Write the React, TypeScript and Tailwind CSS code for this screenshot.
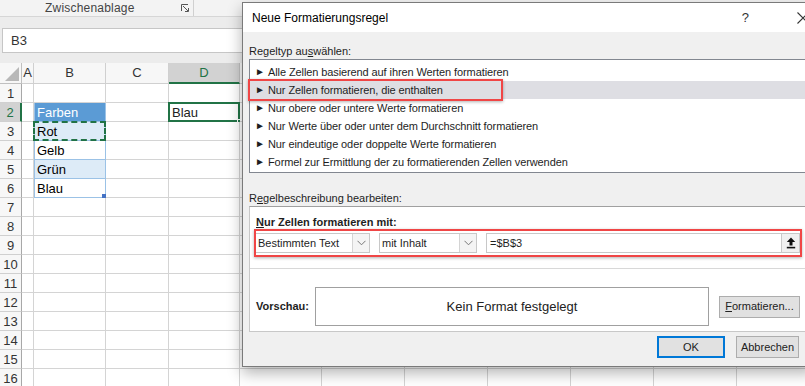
import React from "react";

const cols = [
  { label: "A", w: 12 },
  { label: "B", w: 72 },
  { label: "C", w: 63 },
  { label: "D", w: 71 },
  { label: "E", w: 82 },
  { label: "F", w: 83 },
  { label: "G", w: 83 },
  { label: "H", w: 83 },
  { label: "I", w: 83 },
  { label: "J", w: 83 },
  { label: "K", w: 83 },
];

// headers from E on sit under the dialog
const visibleHeaders = ["A", "B", "C", "D"];

const rows = Array.from({ length: 16 }, (_, i) => i + 1);

const ruleTypes = [
  "Alle Zellen basierend auf ihren Werten formatieren",
  "Nur Zellen formatieren, die enthalten",
  "Nur obere oder untere Werte formatieren",
  "Nur Werte über oder unter dem Durchschnitt formatieren",
  "Nur eindeutige oder doppelte Werte formatieren",
  "Formel zur Ermittlung der zu formatierenden Zellen verwenden",
];

function Cell({ row, col }: { row: number; col: string }) {
  const w = cols.find((c) => c.label === col)!.w;
  let cls = "border-r border-b border-[#d4d4d4] bg-white";
  let text = "";
  let extra: React.ReactNode = null;

  if (col === "B" && row >= 2 && row <= 6) {
    cls = "border-r border-b border-[#9bc2e6] shadow-[inset_1px_0_0_#9bc2e6]";
    if (row === 2) cls += " bg-[#5b9bd5] text-white";
    else if (row === 3 || row === 5) cls += " bg-[#ddebf7] text-black";
    else cls += " bg-white text-black";
    text = ["", "", "Farben", "Rot", "Gelb", "Grün", "Blau"][row];
    if (row === 3) {
      extra = <span className="pointer-events-none absolute -left-px -top-px -right-px -bottom-px border-2 border-dashed border-[#217346]" />;
    }
    if (row === 6) {
      extra = <span className="absolute -bottom-px -right-px h-[4px] w-[4px] bg-[#4472c4]" />;
    }
  }
  if (col === "D" && row === 2) {
    text = "Blau";
    extra = (
      <>
        <span className="pointer-events-none absolute -left-px -top-px -right-px -bottom-px border-2 border-[#217346]" />
        <span className="absolute -bottom-[3px] -right-[3px] h-[5px] w-[5px] border border-white bg-[#217346]" />
      </>
    );
  }

  return (
    <div
      className={`relative flex h-[19px] shrink-0 items-center pl-[3px] text-[13px] leading-[17px] ${cls}`}
      style={{ width: w }}
    >
      {text}
      {extra}
    </div>
  );
}

function Sheet() {
  return (
    <div className="flex flex-col font-['Liberation_Sans',sans-serif] text-[#222]">
      <div className="flex h-[17px] items-center border-b border-[#d6d6d6] bg-[#f3f3f3]">
        <span className="ml-[45px] w-[126px] text-[12px] leading-[16px] tracking-[0.2px] text-[#444]">Zwischenablage</span>
        <svg className="ml-[10px]" width="8" height="8" viewBox="0 0 8 8" fill="none" stroke="#555" strokeWidth="1">
          <path d="M0.5 7 V0.5 H7" />
          <path d="M2 2 L7 7 M7.5 4 V7.5 H4" />
        </svg>
        <span className="ml-[4px] h-full w-px bg-[#d0d0d0]" />
      </div>
      <div className="h-[46px] bg-[#ececec] pt-[11px]">
        <div className="ml-[2px] flex h-[25px] w-[260px] items-center border border-[#c6c6c6] bg-white pl-[8px] text-[13px] text-[#333]">
          B3
        </div>
      </div>
      <div className="flex h-[21px] bg-[#f7f7f7]">
        <div className="flex w-[22px] shrink-0 items-end justify-end border-r border-b border-[#c0c0c0] p-[2px]">
          <svg width="14" height="14" viewBox="0 0 14 14">
            <polygon points="14,0 14,14 0,14" fill="#b8b8b8" />
          </svg>
        </div>
        {cols.map((c) =>
          c.label === "D" ? (
            <div
              key={c.label}
              className="flex shrink-0 items-center justify-center border-r border-b-2 border-r-[#c0c0c0] border-b-[#217346] bg-[#d2d2d2] text-[13px] text-[#217346]"
              style={{ width: c.w }}
            >
              {c.label}
            </div>
          ) : (
            <div
              key={c.label}
              className="flex shrink-0 items-center justify-center border-r border-b border-[#d0d0d0] text-[13px] text-[#333]"
              style={{ width: c.w }}
            >
              {visibleHeaders.includes(c.label) ? c.label : null}
            </div>
          ),
        )}
      </div>
      {rows.map((r) => (
        <div key={r} className="flex">
          <div
            className={`flex h-[19px] w-[22px] shrink-0 items-center justify-center border-b border-[#d0d0d0] text-[13px] leading-[17px] ${
              r === 2
                ? "border-r-2 border-r-[#217346] bg-[#d2d2d2] text-[#217346]"
                : "border-r border-r-[#a8a8a8] bg-[#f7f7f7] text-[#333]"
            }`}
          >
            {r}
          </div>
          {cols.map((c) => (
            <Cell key={c.label} row={r} col={c.label} />
          ))}
        </div>
      ))}
    </div>
  );
}

function Chevron() {
  return (
    <svg width="9" height="6" viewBox="0 0 9 6" fill="none" stroke="#777" strokeWidth="1">
      <path d="M0.5 0.8 L4.5 4.8 L8.5 0.8" />
    </svg>
  );
}

function SelectBox({ value, w }: { value: string; w: number }) {
  return (
    <div className="flex h-[20px] shrink-0 items-stretch border border-[#c8c8c8] bg-white" style={{ width: w }}>
      <span className="flex flex-1 items-center pl-[2px]">{value}</span>
      <span className="flex w-[17px] items-center justify-center border-l border-[#d4d4d4] bg-[#f4f4f4]">
        <Chevron />
      </span>
    </div>
  );
}

function Button({ children, primary, w }: { children: React.ReactNode; primary?: boolean; w: number }) {
  return (
    <div
      className={`flex h-[22px] items-center justify-center bg-[#e1e1e1] text-[11px] text-[#222] ${
        primary ? "border-2 border-[#0078d7]" : "border border-[#adadad]"
      }`}
      style={{ width: w }}
    >
      {children}
    </div>
  );
}

function Dialog() {
  return (
    <div className="absolute left-[242px] top-[2px] flex h-[365px] w-[572px] flex-col border border-[#7a7a7a] bg-[#f0f0f0] font-['Liberation_Sans',sans-serif] text-[11px] text-[#1e1e1e] shadow-[0_6px_14px_rgba(0,0,0,0.3)]">
      <div className="flex h-[29px] shrink-0 items-center bg-white pl-[9px]">
        <span className="text-[12px] text-black">Neue Formatierungsregel</span>
        <span className="ml-auto text-[13px] text-[#333]">?</span>
        <svg className="ml-[48px] mr-[4px]" width="12" height="12" viewBox="0 0 12 12" stroke="#333" strokeWidth="1.1">
          <path d="M0.5 0.5 L11.5 11.5 M11.5 0.5 L0.5 11.5" />
        </svg>
      </div>

      <div className="flex flex-1 flex-col px-[6px] pt-[11px]">
        <div className="h-[16px] leading-[16px]">
          Regeltyp au<span className="underline">s</span>wählen:
        </div>
        <div className="h-[114px] border border-[#828790] bg-white pt-[3px]">
          {ruleTypes.map((t, i) => (
            <div
              key={t}
              className={`flex h-[18px] items-center gap-[3px] pl-[5px] leading-[18px] ${i === 1 ? "bg-[#dedee3]" : ""}`}
            >
              <span className="w-[10px] text-[10px] leading-[18px]">►</span>
              <span className="whitespace-nowrap tracking-[-0.1px]">{t}</span>
            </div>
          ))}
        </div>

        <div className="mt-[17px] h-[16px] leading-[16px]">
          R<span className="underline">e</span>gelbeschreibung bearbeiten:
        </div>
        <div className="flex h-[126px] flex-col border border-[#c8c8c8] border-t-[#a0a0a0] bg-white pt-[7px]">
          <div className="h-[16px] pl-[6px] font-bold leading-[16px]">
            <span className="underline">N</span>ur Zellen formatieren mit:
          </div>
          <div className="mt-[3px] flex items-center pl-[5px] pr-[6px]">
            <SelectBox value="Bestimmten Text" w={115} />
            <span className="w-[9px]" />
            <SelectBox value="mit Inhalt" w={98} />
            <span className="w-[9px]" />
            <div className="flex h-[20px] flex-1 items-stretch border border-[#c8c8c8] bg-white">
              <span className="flex flex-1 items-center pl-[3px]">=$B$3</span>
              <span className="flex w-[18px] items-center justify-center border-l border-[#c8c8c8] bg-[#f0f0f0]">
                <svg width="10" height="12" viewBox="0 0 10 12" fill="#111">
                  <polygon points="5,0.5 0.8,5 3.5,5 3.5,8.6 6.5,8.6 6.5,5 9.2,5" />
                  <rect x="0.8" y="9.8" width="8.4" height="1.6" />
                </svg>
              </span>
            </div>
          </div>
          <div className="mt-[15px] h-px bg-[#d8d8d8]" />
          <div className="mt-[18px] flex items-center pl-[6px] pr-[6px]">
            <span className="w-[59px] font-bold">Vorschau:</span>
            <div className="flex h-[39px] w-[394px] items-center justify-center border border-[#a0a0a0] text-[13px] text-[#222]">
              Kein Format festgelegt
            </div>
            <span className="ml-auto">
              <Button w={81}>
                <span className="underline">F</span>ormatieren...
              </Button>
            </span>
          </div>
        </div>

        <div className="mt-[4px] flex justify-end gap-[11px] pr-[8px]">
          <Button primary w={68}>
            OK
          </Button>
          <Button w={63}>Abbrechen</Button>
        </div>
      </div>

      <span className="pointer-events-none absolute left-[5px] top-[76px] h-[22px] w-[255px] border-2 border-[#f04646] shadow-[0_1px_3px_rgba(0,0,0,0.3)]" />
      <span className="pointer-events-none absolute left-[11px] top-[226px] h-[28px] w-[548px] border-2 border-[#f04646] shadow-[0_1px_3px_rgba(0,0,0,0.3)]" />
    </div>
  );
}

export default function App() {
  return (
    <div className="relative h-[386px] w-[805px] overflow-hidden bg-white">
      <Sheet />
      <Dialog />
    </div>
  );
}
